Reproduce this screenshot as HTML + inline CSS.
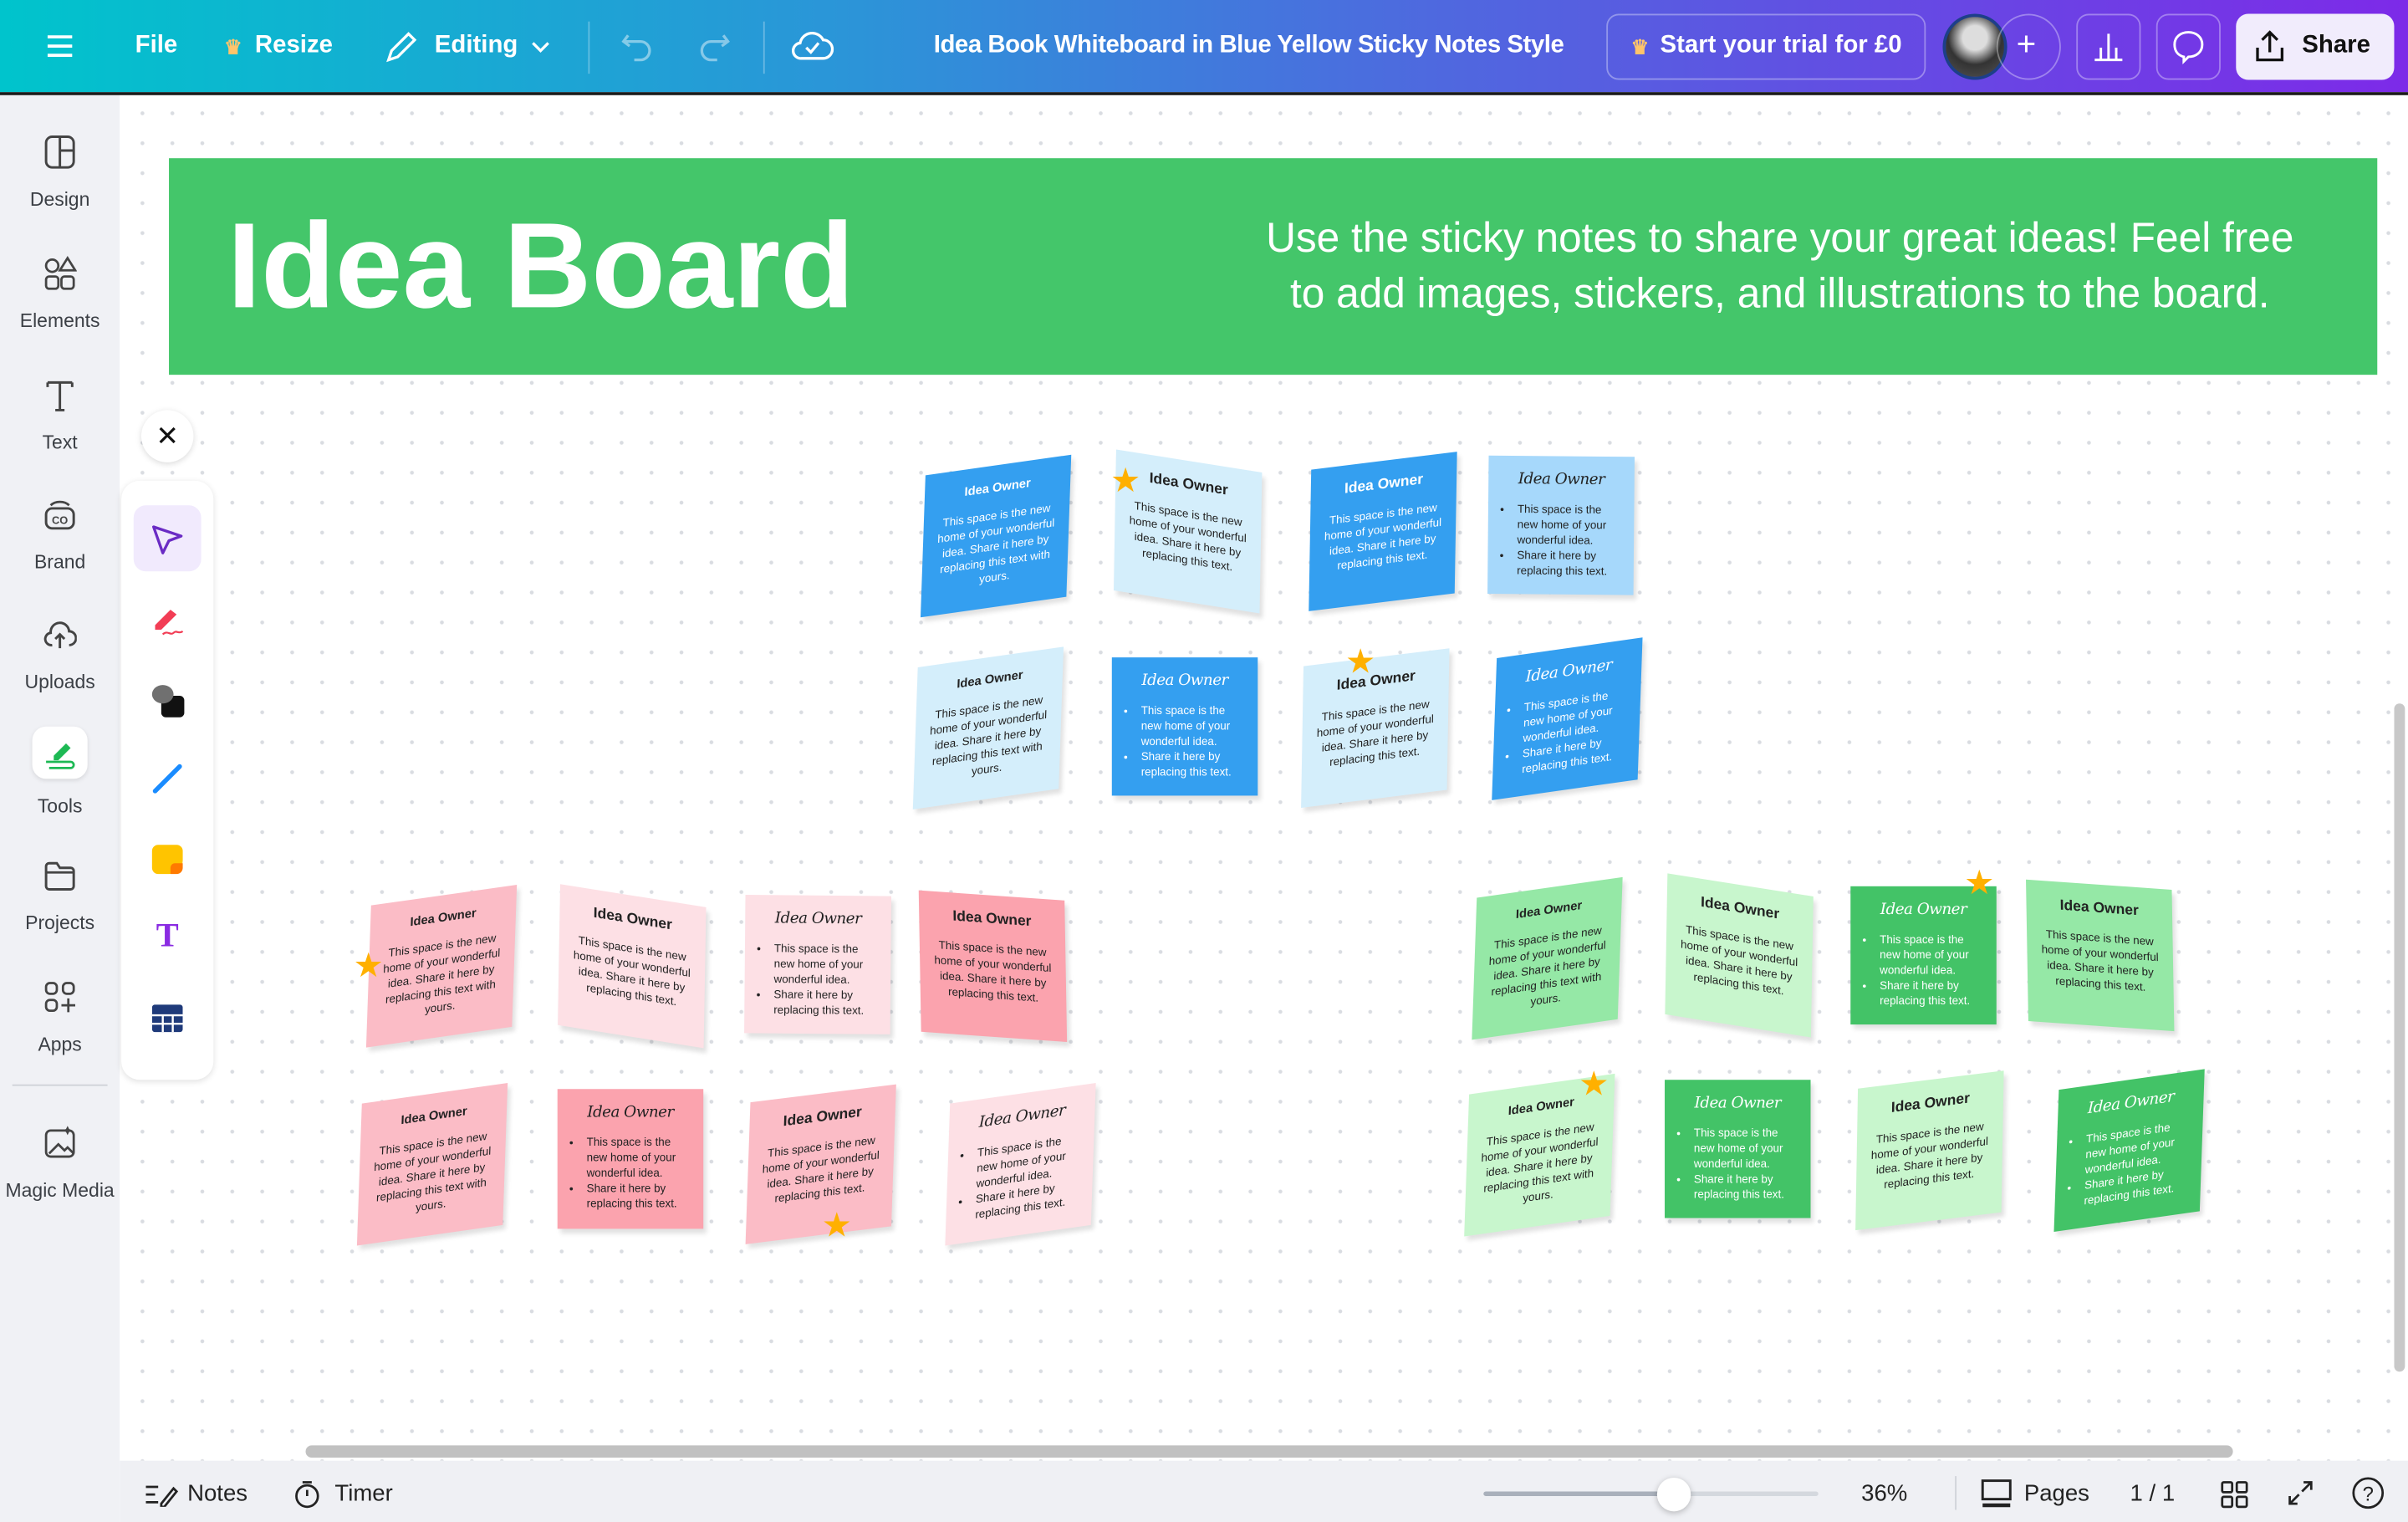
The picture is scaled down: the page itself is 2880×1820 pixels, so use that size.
<!DOCTYPE html>
<html><head><meta charset="utf-8"><style>
*{margin:0;padding:0;box-sizing:border-box}
body{width:2880px;height:1820px;overflow:hidden;background:#fff;font-family:"Liberation Sans",sans-serif}
#w{position:absolute;left:0;top:0;width:1568px;height:991px;transform:scale(1.836735);transform-origin:0 0;overflow:hidden;background:#fff}
.top{position:absolute;left:0;top:0;width:1568px;height:60px;background:linear-gradient(90deg,#00c4cc 0%,#2b95d8 35%,#4f68df 60%,#7d2ae8 100%);color:#fff}
.top .t{position:absolute;top:21px;font-size:16px;font-weight:bold;white-space:nowrap}
.line{position:absolute;left:0;top:60px;width:1568px;height:2px;background:#1a1a1a}
.side{position:absolute;left:0;top:62px;width:78px;height:929px;background:#f0f1f5}
.si{position:absolute;left:0;width:78px;text-align:center;font-size:12.5px;color:#3b3f45}
.si svg{display:block;margin:0 auto 12px}
.canvas{position:absolute;left:78px;top:62px;width:1490px;height:889px;background-color:#fff;background-image:radial-gradient(circle,#d9dce1 1.1px,transparent 1.4px);background-size:19.5px 19.5px;background-position:5px 2px}
.banner{position:absolute;left:110px;top:103px;width:1438px;height:141px;background:#44c66a;color:#fff}
.note{position:absolute;width:95px;height:92px;text-align:center;font-family:"Liberation Sans Narrow","Liberation Sans",sans-serif;color:#222;box-shadow:2px 3px 3px rgba(0,0,0,.12);padding:10px 7px 0}
.note h4{font-size:9.5px;font-weight:bold;margin-bottom:9px}
.note p{font-size:7.3px;line-height:10px}
.note.s h4{font-family:"DejaVu Serif",serif;font-style:italic;font-weight:normal;font-size:10px;letter-spacing:-.3px}
.note ul{text-align:left;font-size:7.3px;line-height:10px;padding-left:12px}
.w{color:#fff}
.star{position:absolute;font-size:22px;color:#ffb000;line-height:1}
.bot{position:absolute;left:78px;top:951px;width:1490px;height:40px;background:#eff0f4;font-size:15px;color:#222}
.bot span{position:absolute;top:13px}
.tb{position:absolute;left:79px;top:313px;width:60px;height:390px;background:#fff;border-radius:12px;box-shadow:0 1px 4px rgba(0,0,0,.12)}
</style></head><body><div id="w">
<div class="top">
  <svg style="position:absolute;left:30px;top:22px" width="18" height="16"><path d="M1 2h16M1 8h16M1 14h16" stroke="#fff" stroke-width="2"/></svg>
  <span class="t" style="left:88px">File</span>
  <span class="t" style="left:146px;color:#ffc46b;font-size:13px;top:23px">♛</span><span class="t" style="left:166px">Resize</span>
  <svg style="position:absolute;left:250px;top:20px" width="22" height="22"><path d="M3 19l2-6L16 2l4 4L9 17z" fill="none" stroke="#fff" stroke-width="1.8"/></svg>
  <span class="t" style="left:283px">Editing</span>
  <svg style="position:absolute;left:345px;top:26px" width="14" height="10"><path d="M2 2l5 5 5-5" fill="none" stroke="#fff" stroke-width="1.8"/></svg>
  <div style="position:absolute;left:383px;top:14px;width:1px;height:34px;background:rgba(255,255,255,.3)"></div>
  <svg style="position:absolute;left:403px;top:20px" width="24" height="20"><path d="M6 3L3 7l4 3M3 7h11a6 6 0 010 12h-4" fill="none" stroke="rgba(255,255,255,.45)" stroke-width="1.8"/></svg>
  <svg style="position:absolute;left:453px;top:20px" width="24" height="20"><path d="M18 3l3 4-4 3M21 7H10a6 6 0 000 12h4" fill="none" stroke="rgba(255,255,255,.45)" stroke-width="1.8"/></svg>
  <div style="position:absolute;left:497px;top:14px;width:1px;height:34px;background:rgba(255,255,255,.3)"></div>
  <svg style="position:absolute;left:515px;top:18px" width="28" height="24"><path d="M7 20a5 5 0 01-1-10 8 8 0 0115-2 6 6 0 010 12z" fill="none" stroke="#fff" stroke-width="1.8"/><path d="M10 13l3 3 5-6" fill="none" stroke="#fff" stroke-width="1.8"/></svg>
  <span class="t" style="left:608px;letter-spacing:-.25px">Idea Book Whiteboard in Blue Yellow Sticky Notes Style</span>
  <div style="position:absolute;left:1046px;top:9px;width:208px;height:43px;border:1px solid rgba(255,255,255,.35);border-radius:8px"></div>
  <span class="t" style="left:1062px;color:#ffc46b;font-size:13px;top:23px">♛</span><span class="t" style="left:1081px">Start your trial for £0</span>
  <div style="position:absolute;left:1265px;top:9px;width:42px;height:43px;border-radius:50%;background:radial-gradient(circle at 50% 35%,#ddd 0 25%,#333 55%,#555);border:2px solid #1d3f8a"></div>
  <div style="position:absolute;left:1300px;top:9px;width:42px;height:43px;border-radius:50%;border:1px solid rgba(255,255,255,.35)"></div>
  <span class="t" style="left:1313px;font-size:22px;top:16px;font-weight:normal">+</span>
  <div style="position:absolute;left:1352px;top:9px;width:42px;height:43px;border:1px solid rgba(255,255,255,.35);border-radius:8px"></div>
  <svg style="position:absolute;left:1362px;top:19px" width="22" height="22"><path d="M2 20h18M6 20v-8M11 20V3M16 20v-8" stroke="#fff" stroke-width="1.6"/></svg>
  <div style="position:absolute;left:1404px;top:9px;width:42px;height:43px;border:1px solid rgba(255,255,255,.35);border-radius:8px"></div>
  <svg style="position:absolute;left:1413px;top:18px" width="24" height="24"><path d="M12 3c5 0 9 3 9 8s-4 8-9 8l-3 3v-3c-4-1-6-4-6-8 0-5 4-8 9-8z" fill="none" stroke="#fff" stroke-width="1.6"/></svg>
  <div style="position:absolute;left:1456px;top:9px;width:103px;height:43px;background:#f1ecfc;border-radius:8px"></div>
  <svg style="position:absolute;left:1466px;top:18px" width="24" height="24"><path d="M12 16V3M7 8l5-5 5 5M4 13v8h16v-8" fill="none" stroke="#111" stroke-width="1.8"/></svg>
  <span class="t" style="left:1499px;color:#111">Share</span>
</div>
<div class="line"></div>
<div class="side">
  <div class="si" style="top:25px"><svg width="22" height="24"><rect x="2" y="2" width="18" height="20" rx="4" fill="none" stroke="#444" stroke-width="1.6"/><path d="M11 2v20M11 11h9" stroke="#444" stroke-width="1.6"/></svg>Design</div>
  <div class="si" style="top:104px"><svg width="22" height="24"><circle cx="6" cy="7" r="4" fill="none" stroke="#444" stroke-width="1.5"/><path d="M16 2l5 8h-10z" fill="none" stroke="#444" stroke-width="1.5"/><rect x="2" y="14" width="8" height="8" rx="2" fill="none" stroke="#444" stroke-width="1.5"/><rect x="12" y="14" width="8" height="8" rx="2" fill="none" stroke="#444" stroke-width="1.5"/></svg>Elements</div>
  <div class="si" style="top:183px"><svg width="22" height="24"><path d="M3 4h16M11 4v18M3 4v3M19 4v3M8 22h6" stroke="#444" stroke-width="1.6" fill="none"/></svg>Text</div>
  <div class="si" style="top:261px"><svg width="22" height="24"><rect x="2" y="8" width="18" height="13" rx="4" fill="none" stroke="#444" stroke-width="1.6"/><path d="M5 6c3-3 9-3 12 0" stroke="#444" stroke-width="1.5" fill="none"/><text x="11" y="18" font-size="7" text-anchor="middle" fill="#444" font-weight="bold" font-family="Liberation Sans">CO</text></svg>Brand</div>
  <div class="si" style="top:339px"><svg width="22" height="24"><path d="M6 19a4 4 0 01-1-8 6 6 0 0112-1 4 4 0 010 9" fill="none" stroke="#444" stroke-width="1.6"/><path d="M11 21v-8M8 15l3-3 3 3" stroke="#444" stroke-width="1.6" fill="none"/></svg>Uploads</div>
  <div class="si" style="top:411px"><div style="width:36px;height:34px;background:#fff;border-radius:9px;margin:0 auto 11px;box-shadow:0 1px 3px rgba(0,0,0,.1);padding-top:6px"><svg width="22" height="22" style="margin:0 auto"><path d="M7 13l8-8 3 3-8 8H7z" fill="#1db954"/><path d="M2 17h16a2 2 0 010 4H4" fill="none" stroke="#1db954" stroke-width="1.5"/></svg></div>Tools</div>
  <div class="si" style="top:496px"><svg width="22" height="24"><path d="M2 6a2 2 0 012-2h5l2 3h7a2 2 0 012 2v10a2 2 0 01-2 2H4a2 2 0 01-2-2z" fill="none" stroke="#444" stroke-width="1.6"/><path d="M2 10h18" stroke="#444" stroke-width="1.5"/></svg>Projects</div>
  <div class="si" style="top:575px"><svg width="22" height="24"><rect x="2" y="3" width="7" height="7" rx="2.5" fill="none" stroke="#444" stroke-width="1.5"/><rect x="13" y="3" width="7" height="7" rx="2.5" fill="none" stroke="#444" stroke-width="1.5"/><rect x="2" y="14" width="7" height="7" rx="2.5" fill="none" stroke="#444" stroke-width="1.5"/><path d="M16.5 13v9M12 17.5h9" stroke="#444" stroke-width="1.5"/></svg>Apps</div>
  <div style="position:absolute;left:8px;top:644px;width:62px;height:1px;background:#cfd2d8"></div>
  <div class="si" style="top:670px"><svg width="22" height="24"><rect x="2" y="4" width="18" height="17" rx="3" fill="none" stroke="#444" stroke-width="1.5"/><path d="M4 19l6-6 4 4 2-2 4 4" stroke="#444" stroke-width="1.5" fill="none"/><path d="M16 1l1 2 2 1-2 1-1 2-1-2-2-1 2-1z" fill="#444"/></svg>Magic Media</div>
</div>
<div class="canvas"></div>
<div class="banner">
  <div style="position:absolute;left:38px;top:30px;font-size:79px;line-height:79px;font-weight:bold;white-space:nowrap">Idea Board</div>
  <div style="position:absolute;left:649px;top:34px;width:800px;text-align:center;font-size:27px;line-height:36px;white-space:nowrap">Use the sticky notes to share your great ideas! Feel free<br>to add images, stickers, and illustrations to the board.</div>
</div>

<!-- blue -->
<div class="note w" style="left:601px;top:303px;background:#349ff0;transform:skewY(-10deg) rotate(2deg)"><h4 style="font-size:8px">Idea Owner</h4><p>This space is the new home of your wonderful idea. Share it here by replacing this text with yours.</p></div>
<div class="note" style="left:726px;top:300px;background:#d4eefb;transform:skewY(8deg) rotate(1deg)"><h4>Idea Owner</h4><p>This space is the new home of your wonderful idea. Share it here by replacing this text.</p></div>
<div class="star" style="left:723px;top:302px">★</div>
<div class="note w" style="left:853px;top:300px;background:#349ff0;transform:skewY(-8deg) rotate(1deg)"><h4>Idea Owner</h4><p>This space is the new home of your wonderful idea. Share it here by replacing this text.</p></div>
<div class="note s" style="left:969px;top:297px;height:90px;background:#a6d8fb;transform:rotate(.5deg)"><h4>Idea Owner</h4><ul><li>This space is the new home of your wonderful idea.</li><li>Share it here by replacing this text.</li></ul></div>

<div class="note" style="left:596px;top:428px;background:#d4eefb;transform:skewY(-10deg) rotate(2deg)"><h4 style="font-size:8px">Idea Owner</h4><p>This space is the new home of your wonderful idea. Share it here by replacing this text with yours.</p></div>
<div class="note s w" style="left:724px;top:428px;height:90px;background:#349ff0"><h4>Idea Owner</h4><ul><li>This space is the new home of your wonderful idea.</li><li>Share it here by replacing this text.</li></ul></div>
<div class="note" style="left:848px;top:428px;background:#d4eefb;transform:skewY(-8deg) rotate(1deg)"><h4>Idea Owner</h4><p>This space is the new home of your wonderful idea. Share it here by replacing this text.</p></div>
<div class="star" style="left:876px;top:420px">★</div>
<div class="note s w" style="left:973px;top:422px;background:#349ff0;transform:skewY(-10deg) rotate(2deg)"><h4>Idea Owner</h4><ul><li>This space is the new home of your wonderful idea.</li><li>Share it here by replacing this text.</li></ul></div>

<!-- pink -->
<div class="note" style="left:240px;top:583px;background:#fbbcc6;transform:skewY(-10deg) rotate(2deg)"><h4 style="font-size:8px">Idea Owner</h4><p>This space is the new home of your wonderful idea. Share it here by replacing this text with yours.</p></div>
<div class="star" style="left:230px;top:618px">★</div>
<div class="note" style="left:364px;top:583px;background:#fde0e5;transform:skewY(8deg) rotate(1deg)"><h4>Idea Owner</h4><p>This space is the new home of your wonderful idea. Share it here by replacing this text.</p></div>
<div class="note s" style="left:485px;top:583px;height:90px;background:#fde0e5;transform:rotate(.5deg)"><h4>Idea Owner</h4><ul><li>This space is the new home of your wonderful idea.</li><li>Share it here by replacing this text.</li></ul></div>
<div class="note" style="left:599px;top:583px;background:#fba3ae;transform:skewY(5deg) rotate(-1deg)"><h4>Idea Owner</h4><p>This space is the new home of your wonderful idea. Share it here by replacing this text.</p></div>

<div class="note" style="left:234px;top:712px;background:#fbbcc6;transform:skewY(-10deg) rotate(2deg)"><h4 style="font-size:8px">Idea Owner</h4><p>This space is the new home of your wonderful idea. Share it here by replacing this text with yours.</p></div>
<div class="note s" style="left:363px;top:709px;height:91px;background:#fba3ae"><h4>Idea Owner</h4><ul><li>This space is the new home of your wonderful idea.</li><li>Share it here by replacing this text.</li></ul></div>
<div class="note" style="left:487px;top:712px;background:#fbbcc6;transform:skewY(-9deg) rotate(2deg)"><h4>Idea Owner</h4><p>This space is the new home of your wonderful idea. Share it here by replacing this text.</p></div>
<div class="star" style="left:535px;top:787px">★</div>
<div class="note s" style="left:617px;top:712px;background:#fde0e5;transform:skewY(-10deg) rotate(2deg)"><h4>Idea Owner</h4><ul><li>This space is the new home of your wonderful idea.</li><li>Share it here by replacing this text.</li></ul></div>

<!-- green -->
<div class="note" style="left:960px;top:578px;background:#95e8a6;transform:skewY(-10deg) rotate(2deg)"><h4 style="font-size:8px">Idea Owner</h4><p>This space is the new home of your wonderful idea. Share it here by replacing this text with yours.</p></div>
<div class="note" style="left:1085px;top:576px;background:#c8f6cd;transform:skewY(8deg) rotate(1deg)"><h4>Idea Owner</h4><p>This space is the new home of your wonderful idea. Share it here by replacing this text.</p></div>
<div class="note s w" style="left:1205px;top:577px;height:90px;background:#43c367"><h4>Idea Owner</h4><ul><li>This space is the new home of your wonderful idea.</li><li>Share it here by replacing this text.</li></ul></div>
<div class="star" style="left:1279px;top:564px">★</div>
<div class="note" style="left:1320px;top:576px;background:#95e8a6;transform:skewY(5deg) rotate(-1deg)"><h4>Idea Owner</h4><p>This space is the new home of your wonderful idea. Share it here by replacing this text.</p></div>

<div class="note" style="left:955px;top:706px;background:#c8f6cd;transform:skewY(-10deg) rotate(2deg)"><h4 style="font-size:8px">Idea Owner</h4><p>This space is the new home of your wonderful idea. Share it here by replacing this text with yours.</p></div>
<div class="star" style="left:1028px;top:695px">★</div>
<div class="note s w" style="left:1084px;top:703px;height:90px;background:#43c367"><h4>Idea Owner</h4><ul><li>This space is the new home of your wonderful idea.</li><li>Share it here by replacing this text.</li></ul></div>
<div class="note" style="left:1209px;top:703px;background:#c8f6cd;transform:skewY(-8deg) rotate(1deg)"><h4>Idea Owner</h4><p>This space is the new home of your wonderful idea. Share it here by replacing this text.</p></div>
<div class="note s w" style="left:1339px;top:703px;background:#43c367;transform:skewY(-10deg) rotate(2deg)"><h4>Idea Owner</h4><ul><li>This space is the new home of your wonderful idea.</li><li>Share it here by replacing this text.</li></ul></div>

<!-- tools -->
<div style="position:absolute;left:92px;top:267px;width:34px;height:34px;border-radius:50%;background:#fff;box-shadow:0 1px 4px rgba(0,0,0,.15);text-align:center;line-height:34px;font-size:18px;color:#111">✕</div>
<div class="tb">
  <div style="position:absolute;left:8px;top:16px;width:44px;height:43px;background:#f1eafd;border-radius:8px"></div>
  <svg style="position:absolute;left:19px;top:27px" width="22" height="22"><path d="M2 3l18 6-8 3-4 8z" fill="none" stroke="#6a2bc4" stroke-width="1.8" stroke-linejoin="round"/></svg>
  <svg style="position:absolute;left:19px;top:79px" width="24" height="24"><path d="M3 15l10-10 4 3-10 10H3z" fill="#f23d55"/><path d="M8 21c3-3 5 1 7-1s3 1 6-1" stroke="#f23d55" fill="none" stroke-width="1.2"/></svg>
  <div style="position:absolute;left:26px;top:140px;width:15px;height:14px;background:#111;border-radius:3px"></div>
  <div style="position:absolute;left:20px;top:133px;width:14px;height:12px;background:#707070;border-radius:50%"></div>
  <svg style="position:absolute;left:19px;top:183px" width="22" height="22"><path d="M3 19L19 3" stroke="#1a8cff" stroke-width="3" stroke-linecap="round"/></svg>
  <div style="position:absolute;left:20px;top:237px;width:20px;height:19px;background:#ffc400;border-radius:4px 4px 9px 4px"></div>
  <div style="position:absolute;left:32px;top:249px;width:8px;height:7px;background:#ff7a00;border-radius:3px 0 4px 0"></div>
  <div style="position:absolute;left:0;top:283px;width:60px;text-align:center;font-size:22px;font-weight:bold;color:#8a2be2;font-family:'Liberation Serif',serif">T</div>
  <svg style="position:absolute;left:20px;top:341px" width="20" height="18"><rect width="20" height="18" rx="2" fill="#1f3a7a"/><path d="M0 7h20M0 12.5h20M7 7v11M13.5 7v11" stroke="#fff" stroke-width="1.3"/></svg>
</div>

<!-- scrollbars -->
<div style="position:absolute;left:199px;top:941px;width:1255px;height:8px;background:#c1c1c1;border-radius:4px"></div>
<div style="position:absolute;left:1559px;top:458px;width:7px;height:435px;background:#c8c8c8;border-radius:4px"></div>

<div class="bot">
  <svg style="position:absolute;left:16px;top:14px" width="22" height="16"><path d="M1 3h8M1 8h6M1 13h8M11 14l8-10 2 2-8 10h-2z" stroke="#222" fill="none" stroke-width="1.5"/></svg>
  <span style="left:44px">Notes</span>
  <svg style="position:absolute;left:113px;top:12px" width="18" height="20"><circle cx="9" cy="11" r="7" fill="none" stroke="#222" stroke-width="1.5"/><path d="M6 2h6M9 11V7" stroke="#222" stroke-width="1.5"/></svg>
  <span style="left:140px">Timer</span>
  <div style="position:absolute;left:888px;top:20px;width:124px;height:3px;background:#a9b0bb;border-radius:2px"></div>
  <div style="position:absolute;left:1012px;top:20px;width:94px;height:3px;background:#d4d8de;border-radius:2px"></div>
  <div style="position:absolute;left:1001px;top:11px;width:22px;height:22px;background:#fff;border-radius:50%;box-shadow:0 1px 4px rgba(0,0,0,.25)"></div>
  <span style="left:1134px">36%</span>
  <div style="position:absolute;left:1195px;top:10px;width:1px;height:22px;background:#d0d3d9"></div>
  <svg style="position:absolute;left:1212px;top:12px" width="20" height="20"><rect x="1" y="1" width="18" height="12" fill="none" stroke="#222" stroke-width="1.6"/><path d="M1 17h18" stroke="#222" stroke-width="2.5"/></svg>
  <span style="left:1240px">Pages</span>
  <span style="left:1309px">1 / 1</span>
  <svg style="position:absolute;left:1368px;top:13px" width="18" height="18"><rect x="1" y="1" width="6.5" height="6.5" rx="1" fill="none" stroke="#222" stroke-width="1.5"/><rect x="10.5" y="1" width="6.5" height="6.5" rx="1" fill="none" stroke="#222" stroke-width="1.5"/><rect x="1" y="10.5" width="6.5" height="6.5" rx="1" fill="none" stroke="#222" stroke-width="1.5"/><rect x="10.5" y="10.5" width="6.5" height="6.5" rx="1" fill="none" stroke="#222" stroke-width="1.5"/></svg>
  <svg style="position:absolute;left:1411px;top:12px" width="18" height="18"><path d="M11 2h5v5M16 2l-6 6M7 16H2v-5M2 16l6-6" stroke="#222" fill="none" stroke-width="1.5"/></svg>
  <svg style="position:absolute;left:1453px;top:10px" width="22" height="22"><circle cx="11" cy="11" r="9.5" fill="none" stroke="#222" stroke-width="1.5"/><text x="11" y="16" text-anchor="middle" font-size="13" font-family="Liberation Sans" fill="#222">?</text></svg>
</div>
</div></body></html>
